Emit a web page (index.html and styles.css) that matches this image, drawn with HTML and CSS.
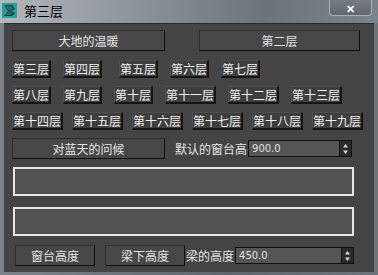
FILE: index.html
```html
<!DOCTYPE html>
<html lang="zh-CN">
<head>
    <meta charset="UTF-8">
    <meta name="viewport" content="width=device-width, initial-scale=1.0">
    <title>第三层</title>
    <link rel="stylesheet" href="styles.css">
</head>
<body>
<div class="window">
  <!-- Title Bar -->
  <div class="titlebar">
    <svg class="app-icon" width="15" height="15" viewBox="0 0 15 15">
      <rect x="0" y="0" width="15" height="15" rx="1" fill="#1fa39a"/>
      <path d="M2 2 L10 2 L13 6 L9 8 L13 10 L10 13 L2 13 L6 8 Z" fill="#1d3f44"/>
      <path d="M3 3 L9 3 L11 6 L7 8 L11 10 L9 12 L3 12 L7 8 Z" fill="#2d6a6a"/>
    </svg>
    <span class="title">第三层</span>
    <button class="close-btn">✕</button>
  </div>

  <!-- Client Area -->
  <div class="client">
    <div class="row row-top">
      <button class="big-btn">大地的温暖</button>
      <button class="big-btn wide">第二层</button>
    </div>

    <div class="row row-floor">
      <button class="floor-btn">第三层</button>
      <button class="floor-btn">第四层</button>
      <button class="floor-btn push">第五层</button>
      <button class="floor-btn">第六层</button>
      <button class="floor-btn">第七层</button>
    </div>

    <div class="row row-floor">
      <button class="floor-btn">第八层</button>
      <button class="floor-btn">第九层</button>
      <button class="floor-btn">第十层</button>
      <button class="floor-btn">第十一层</button>
      <button class="floor-btn">第十二层</button>
      <button class="floor-btn">第十三层</button>
    </div>

    <div class="row row-floor tight">
      <button class="floor-btn">第十四层</button>
      <button class="floor-btn">第十五层</button>
      <button class="floor-btn">第十六层</button>
      <button class="floor-btn">第十七层</button>
      <button class="floor-btn">第十八层</button>
      <button class="floor-btn">第十九层</button>
    </div>

    <div class="row row-mid">
      <button class="big-btn">对蓝天的问候</button>
      <span class="label">默认的窗台高</span>
      <div class="spinner">
        <span class="spinner-value">900.0</span>
        <span class="spinner-arrows">
          <svg width="7" height="12" viewBox="0 0 7 12"><path d="M3.5 1 L6 4.5 L1 4.5 Z M3.5 11 L6 7.5 L1 7.5 Z" fill="#d8d8d8"/></svg>
        </span>
      </div>
    </div>

    <div class="list-box"></div>
    <div class="list-box"></div>

    <div class="row row-bottom">
      <button class="big-btn small">窗台高度</button>
      <button class="big-btn small">梁下高度</button>
      <span class="label">梁的高度</span>
      <div class="spinner long">
        <span class="spinner-value">450.0</span>
        <span class="spinner-arrows">
          <svg width="7" height="12" viewBox="0 0 7 12"><path d="M3.5 1 L6 4.5 L1 4.5 Z M3.5 11 L6 7.5 L1 7.5 Z" fill="#d8d8d8"/></svg>
        </span>
      </div>
    </div>
  </div>
</div>
</body>
</html>
```

FILE: styles.css
```css
/* Page */
body {
  margin: 0;
  font-family: "Noto Sans CJK SC", sans-serif;
  background: #5d636a;
}

button {
  font-family: "Noto Sans CJK SC", sans-serif;
  padding: 0;
  cursor: pointer;
}

/* Window frame */
.window {
  width: 378px;
  height: 275px;
  display: flex;
  flex-direction: column;
  background: linear-gradient(to right, #7d848b, #5f666d 60%, #6d747b);
  overflow: hidden;
}

/* Title Bar */
.titlebar {
  height: 23px;
  display: flex;
  align-items: flex-start;
  background: linear-gradient(to right, #b3b8bc 0%, #8d949a 35%, #6c737a 70%, #7c848b 100%);
}

.app-icon {
  margin: 3px 0 0 2px;
}

.title {
  margin: 2px 0 0 7px;
  font-size: 13px;
  line-height: 17px;
  color: #000;
}

.close-btn {
  margin-left: auto;
  margin-right: 6px;
  width: 43px;
  height: 16px;
  border: 1px solid #a9afb5;
  border-top: none;
  border-radius: 0 0 4px 4px;
  background: linear-gradient(#747b82, #61686f);
  color: #fff;
  font-size: 11px;
  font-weight: bold;
  line-height: 14px;
}

/* Client Area */
.client {
  flex: 1;
  margin: 0 4px 3px 4px;
  background: #444444;
  border-top: 1px solid #2a2a2a;
  padding: 6px 0 0 8px;
  display: flex;
  flex-direction: column;
}

.row {
  display: flex;
  align-items: center;
}

/* Large buttons */
.big-btn {
  width: 153px;
  height: 21px;
  background: #474747;
  border: 1px solid #2e2e2e;
  border-right-color: #0d0d0d;
  border-bottom-color: #0d0d0d;
  color: #e4e4e4;
  font-size: 12px;
  line-height: 19px;
}

.big-btn.wide {
  width: 161px;
  margin-left: 34px;
}

.big-btn.small {
  width: 80px;
  margin-right: 10px;
}

.big-btn.small:first-child {
  margin-left: 3px;
}

/* Floor buttons */
.row-floor {
  gap: 12px;
  margin-top: 8px;
}

.row-top + .row-floor {
  margin-top: 9px;
}

.row-floor.tight {
  gap: 9px;
}

.floor-btn {
  height: 18px;
  padding: 0;
  background: #3e3e3e;
  border: none;
  border-right: 2px solid #151515;
  border-bottom: 2px solid #151515;
  border-top: 1px solid #4e4e4e;
  border-left: 1px solid #4e4e4e;
  color: #f0f0f0;
  font-size: 12px;
  line-height: 15px;
}

.floor-btn.push {
  margin-left: 5px;
}

/* Mid row */
.row-mid {
  margin-top: 8px;
}

.label {
  color: #e4e4e4;
  font-size: 12px;
  margin-left: 10px;
  white-space: nowrap;
}

.row-bottom .label {
  margin-left: -9px;
}

.spinner {
  width: 104px;
  height: 17px;
  margin-left: 1px;
  display: flex;
  background: #555;
  border: 1px solid #111;
  border-right: none;
  box-sizing: border-box;
}

.spinner.long {
  width: 119px;
}

.spinner-value {
  flex: 1;
  font-family: "DejaVu Sans", sans-serif;
  font-size: 10px;
  line-height: 15px;
  color: #e0e0e0;
  padding-left: 3px;
}

.spinner-arrows {
  width: 11px;
  background: #2a2a2a;
  border-left: 1px solid #111;
  border-right: 1px solid #111;
  display: flex;
  align-items: center;
  justify-content: center;
}

/* List boxes */
.list-box {
  width: 341px;
  height: 29px;
  margin: 8px 0 0 1px;
  background: #525252;
  border: 2px solid #e6e6e6;
  box-sizing: border-box;
}

.list-box + .list-box {
  margin-top: 11px;
}

.row-bottom {
  margin-top: 9px;
}
```
